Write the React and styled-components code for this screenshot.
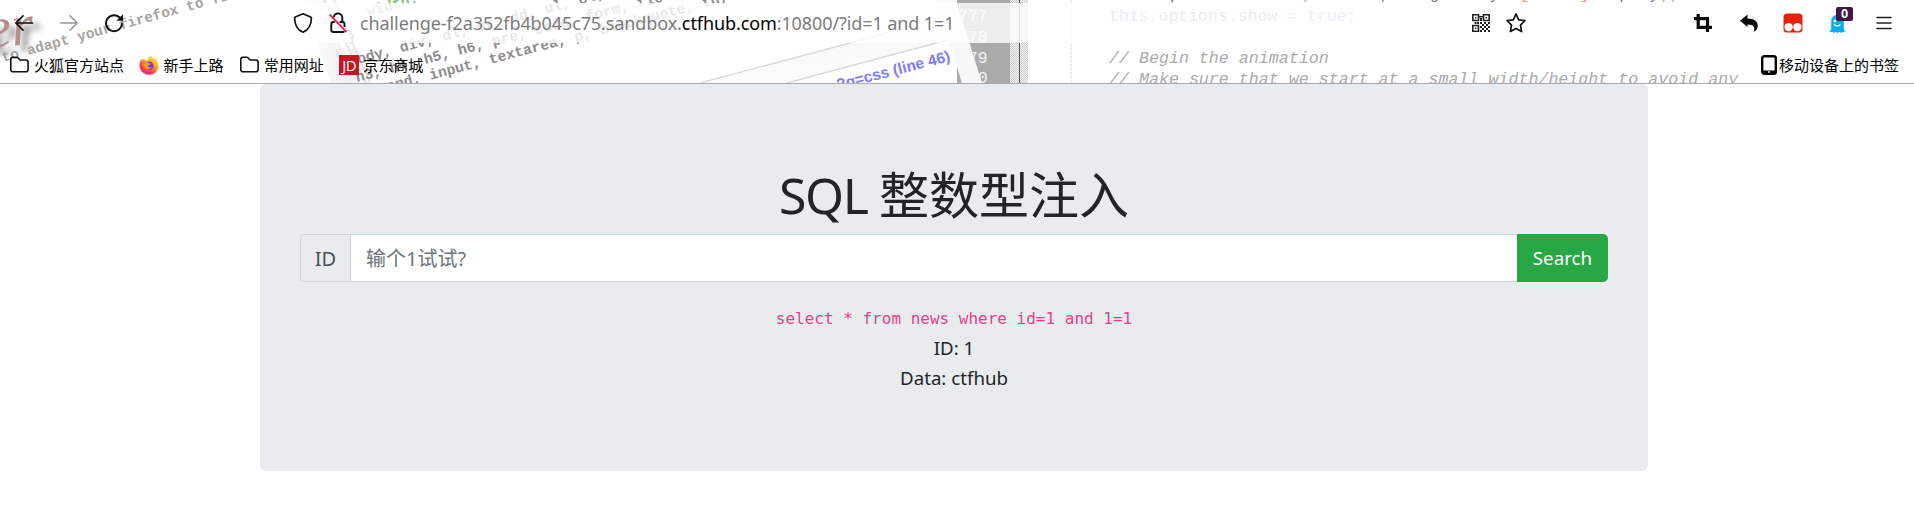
import React from "react";
import styled, { createGlobalStyle } from "styled-components";

const GlobalStyle = createGlobalStyle`
  * { box-sizing: border-box; }
  body {
    margin: 0;
    background: #fff;
    color: #212529;
    font-family: "Noto Sans", "Noto Sans CJK SC", sans-serif;
    overflow: hidden;
  }
  svg { display: block; flex: none; }
`;

const Page = styled.div`
  height: 508px;
`;

const Chrome = styled.header`
  position: relative;
  height: 84px;
  border-bottom: 1px solid #a9a9ab;
  overflow: hidden;
`;

const ThemeArt = styled.svg`
  position: absolute;
  inset: 0;
`;

const NavBar = styled.div`
  position: relative;
  display: flex;
  align-items: center;
  height: 45px;
  padding: 1px 22px 0 14px;
`;

const NavButtons = styled.div`
  display: flex;
  align-items: center;
  gap: 25px;
  width: 270px;
`;

const UrlBar = styled.div`
  display: flex;
  align-items: center;
  width: 1257px;
  height: 40px;
  padding: 0 14px 0 9px;
  background: rgba(255, 255, 255, 0.8);
`;

const UrlText = styled.div`
  flex: 1;
  margin-left: 12px;
  font-size: 18px;
  line-height: 36px;
  color: #7b7b7c;
  white-space: pre;
  letter-spacing: ${(p) => p.$spacing};
`;

const Host = styled.span`
  color: #000;
`;

const Icon = styled.span`
  display: flex;
  margin-left: ${(p) => p.$left || 0}px;
`;

const Extensions = styled.div`
  display: flex;
  align-items: center;
  margin-left: auto;
`;

const GhostWrap = styled.div`
  position: relative;
  margin-left: 26px;
  padding-right: 7px;
`;

const Badge = styled.span`
  position: absolute;
  left: 7px;
  top: -7px;
  width: 17px;
  height: 14px;
  border-radius: 2px;
  background: #421640;
  color: #fff;
  font-size: 12.5px;
  font-weight: 700;
  line-height: 14px;
  text-align: center;
`;

const Bookmarks = styled.div`
  position: relative;
  display: flex;
  align-items: center;
  height: 37px;
  margin-top: 1px;
  padding: 0 15px 0 9px;
  font-size: 15px;
  color: #000;
`;

const Bookmark = styled.div`
  display: flex;
  align-items: center;
  gap: ${(p) => p.$gap || 4}px;
  margin-right: 15.4px;
  line-height: 22px;
  white-space: nowrap;

  &:last-child {
    margin: 0 0 0 auto;
  }
`;

const JdLogo = styled.span`
  width: 20px;
  height: 20px;
  background: #c71622;
  color: #fff;
  font: 15px/21px "Open Sans", sans-serif;
  letter-spacing: -0.5px;
  text-align: center;
`;

const Panel = styled.main`
  width: 1388px;
  height: 387px;
  margin-left: 260px;
  padding: 80px 40px;
  border-radius: 6px;
  background: #e9ecef;
  text-align: center;
`;

const Title = styled.h1`
  margin: 0 0 10px;
  padding-top: 2px;
  font-size: 50px;
  font-weight: 400;
  line-height: 58px;
`;

const Latin = styled.span`
  letter-spacing: -1.4px;
`;

const SearchForm = styled.div`
  display: flex;
  height: 48px;
  margin-bottom: 21px;
  font-size: 20px;
`;

const Addon = styled.label`
  width: 50px;
  border: 1px solid #ced4da;
  border-right: 0;
  border-radius: 5px 0 0 5px;
  color: #495057;
  line-height: 47px;
`;

const Field = styled.input`
  flex: 1;
  min-width: 0;
  padding: 0 15px;
  border: 1px solid #ced4da;
  border-right: 0;
  border-radius: 0;
  background: #fff;
  font: inherit;
  outline: none;

  &::placeholder {
    color: #6c757d;
    opacity: 1;
  }
`;

const SearchButton = styled.button`
  width: 91px;
  padding: 0;
  border: 0;
  border-radius: 0 5px 5px 0;
  background: #28a745;
  color: #fff;
  font: inherit;
  font-size: 18.800px;
`;

const Result = styled.div`
  font-size: 18.700px;
  line-height: 30px;
`;

const Query = styled.code`
  display: block;
  color: #e83e8c;
  font: 16px/31px "DejaVu Sans Mono", monospace;
  height: 30px;
`;

const Folder = () => (
  <svg width="21" height="20" viewBox="0 0 21 20" fill="none" stroke="#111" strokeWidth="1.6" strokeLinejoin="round">
    <path d="M1.8 5v9.5a2.3 2.3 0 0 0 2.3 2.3h12.7a2.3 2.3 0 0 0 2.3-2.3V7.3A2.3 2.3 0 0 0 16.800 5H11L9.200 2.900A2 2 0 0 0 7.700 2.200H4.100A2.300 2.300 0 0 0 1.800 4.500z" />
  </svg>
);

const Firefox = () => (
  <svg width="20" height="20" viewBox="0 0 20 20">
    <defs>
      <linearGradient id="fox" x1="0.8" y1="0.05" x2="0.2" y2="1">
        <stop offset="0" stopColor="#fff04a" />
        <stop offset="0.4" stopColor="#ff9a24" />
        <stop offset="0.7" stopColor="#ff4139" />
        <stop offset="1" stopColor="#e91fa0" />
      </linearGradient>
    </defs>
    <path fill="url(#fox)" d="M2.200 4l1.500 1.600L5 3.500l1 2 2.500-.3C9.300 2.500 11 1 12.500.4c0 1.800 1.200 2.500 2.500 3.600l.4-1.500c3 2.600 4.300 5.800 4 9C18.800 16.300 15 19.800 10.300 19.800 5 19.800.8 16 .5 10.700.4 8 1 5.700 2.200 4z" />
    <circle cx="10.300" cy="10.800" r="4.300" fill="#6a3ee0" />
    <path fill="#ff9424" d="M4.500 7.500c2-1.500 4-.7 5.500.8l2 .3c-.2 1.200-2.600 1.200-3 2.400-.2 1.200 1.500 2.200 3.700 1-1 2.700-4.900 3.400-7 1.300-1.500-1.600-1.800-3.800-1.200-5.800z" />
  </svg>
);

const Back = ({ color }) => (
  <svg width="20" height="20" viewBox="0 0 20 20" fill="none" stroke={color} strokeWidth="1.7" strokeLinecap="round" strokeLinejoin="round">
    <path d="M18.500 10H2M9 2.800 1.800 10 9 17.200" />
  </svg>
);

const Forward = () => (
  <svg width="20" height="20" viewBox="0 0 20 20" fill="none" stroke="#969697" strokeWidth="1.600" strokeLinecap="round" strokeLinejoin="round">
    <path d="M1.500 10H18M11 2.800 18.200 10 11 17.200" />
  </svg>
);

const Reload = () => (
  <svg width="20" height="20" viewBox="0 0 20 20" fill="none" stroke="#111" strokeWidth="1.900">
    <path d="M16.500 5.500A8 8 0 1 0 18 10.800" strokeLinecap="round" />
    <path d="M19 1.200v6.600h-6.600z" fill="#111" stroke="none" />
  </svg>
);

const Shield = () => (
  <svg width="20" height="22" viewBox="0 0 20 22" fill="none" stroke="#111" strokeWidth="1.700" strokeLinejoin="round">
    <path d="M10 1.800 17.700 5q.7.300.7 1C18.300 12.500 15.500 18 10 20.200 4.500 18 1.700 12.500 1.600 6q0-.7.7-1z" />
  </svg>
);

const Lock = () => (
  <svg width="20" height="22" viewBox="0 0 20 22" fill="none" stroke="#111" strokeWidth="1.900">
    <path d="M5.700 5.500a4.300 4.300 0 0 1 8.600 0.500v4M11.500 10h3a2 2 0 0 1 2 2v3M3.300 11.500v6.500a2 2 0 0 0 2 2h9.400a2 2 0 0 0 1.600-.8M3.300 12.500q0-2.500 2-2.500h1.500" />
    <path d="m1.500 2.500 17 17.500" stroke="#e8285a" strokeWidth="1.800" />
  </svg>
);

const QrCode = () => (
  <svg width="20" height="20" viewBox="0 0 20 20" fill="none" stroke="#222" strokeWidth="1.600">
    <path d="M1.800 1.800h5.700v5.700H1.800zM12.500 1.800h5.700v5.700h-5.700zM1.800 12.500h5.700v5.700H1.800z" />
    <path fill="#222" stroke="none" d="M4 4h1.500v1.500H4zM14.600 4h1.500v1.500h-1.500zM4 14.600h1.500v1.500H4zM8 3h4v1.500H8zM9 5h2v3H9zM3.500 9h2v2h-2zM6 9h2v2H6zM9 9h2v2H9zM13 9h2v2h-2zM17 9h2v2h-2zM11 11h2v2h-2zM15 11h2v2h-2zM9 13h2v2H9zM13 13h2v2h-2zM17 13h2v2h-2zM11 15h2v2h-2zM15 15h2v2h-2zM9 17h2v2H9zM13 17h2v2h-2zM17 17h2v2h-2z" />
  </svg>
);

const Star = () => (
  <svg width="22" height="22" viewBox="0 0 22 22" fill="none" stroke="#111" strokeWidth="1.700" strokeLinejoin="round">
    <path d="m11 2 2.700 5.800 6.300.8-4.500 4.400 1.100 6.600L11 16.500l-5.600 3.100L6.500 13 2 8.600l6.300-.8z" />
  </svg>
);

const Crop = () => (
  <svg width="20" height="20" viewBox="0 0 20 20" fill="none" stroke="#0c0c0d" strokeWidth="3.200">
    <path d="M5.200 1v13.400H19M1 5.600h13.500V19" />
  </svg>
);

const Reply = () => (
  <svg width="20" height="20" viewBox="0 0 20 20">
    <path fill="#0c0c0d" d="M1 7.700 8.500 1.500v4c6.500 0 10.300 2.700 10.300 7.500 0 2.500-1.300 4.500-4.300 6 2-4.500.5-7.500-6-7.600V14z" />
  </svg>
);

const Monkey = () => (
  <svg width="20" height="20" viewBox="0 0 20 20">
    <rect x="0.500" y="0.500" width="19" height="19" rx="3.500" fill="#e8230b" />
    <circle cx="5.600" cy="14.100" r="4.200" fill="#fff" />
    <circle cx="14.400" cy="14.100" r="4.200" fill="#fff" />
  </svg>
);

const Ghost = () => (
  <svg width="17" height="19" viewBox="0 0 17 19">
    <path fill="#00aef0" d="M2.200 15.500V7a6.300 6.300 0 0 1 12.600 0v8.500l2 2.500-3-.3-1.500 1.200-2-1.200-1.800 1.200-1.800-1.200-2 1.200L3.300 17.700.2 18z" />
    <circle cx="6" cy="7" r="1.500" fill="#fff" />
    <path d="M5 10.500q3.500 3 6.500 0" stroke="#fff" fill="none" strokeWidth="1.300" />
  </svg>
);

const Menu = () => (
  <svg width="16" height="16" viewBox="0 0 16 16" stroke="#222" strokeWidth="1.500" strokeLinecap="round">
    <path d="M1 2.500h14M1 8h14M1 13.500h14" />
  </svg>
);

const Phone = () => (
  <svg width="16" height="20" viewBox="0 0 16 20">
    <rect x="1.200" y="1.200" width="13.600" height="17.600" rx="2" fill="none" stroke="#000" strokeWidth="2.400" />
    <path d="M1 15.500h14v3.500H1z" />
    <circle cx="8" cy="17" r="0.900" fill="#fff" />
  </svg>
);

const mono = '"Liberation Mono", monospace';

const Backdrop = () => (
  <ThemeArt width="1914" height="83" viewBox="0 0 1914 83" aria-hidden="true">
    <defs>
      <linearGradient id="edge" x1="0" x2="1">
        <stop offset="0" stopColor="#fff" />
        <stop offset="1" stopColor="#e4e4e4" />
      </linearGradient>
      <linearGradient id="band" x1="0" y1="0" x2="0.300" y2="1">
        <stop offset="0" stopColor="#ececec" />
        <stop offset="1" stopColor="#fafafa" />
      </linearGradient>
      <pattern id="dots" width="2" height="2" patternUnits="userSpaceOnUse">
        <rect width="2" height="2" fill="#f4f4f4" />
        <rect width="1" height="1" fill="#ccc" />
        <rect x="1" y="1" width="1" height="1" fill="#ccc" />
      </pattern>
      <filter id="soft"><feGaussianBlur stdDeviation="3" /></filter>
    </defs>
    <g fontFamily='"Liberation Serif", serif' fontSize="58" fontStyle="italic" transform="rotate(-6 0 46)">
      <text x="-7" y="54" fill="#888" filter="url(#soft)">er</text>
      <text x="-13" y="47" fill="#b38f8f">er</text>
    </g>
    <g fontFamily={mono} fontSize="14.500" fontWeight="700" fill="#a6a3a1">
      <text transform="translate(3 62) rotate(-15.400)">to adapt your firefox to fit</text>
    </g>
    <path d="M302 0h22l30 83h-23z" fill="url(#edge)" opacity="0.6" />
    <path d="M324 0l42 83M334 0l36 83" stroke="#dedede" strokeWidth="1.500" />
    <g fontFamily={mono} fontSize="14.700" fontWeight="700" fill="#8d8b8e">
      <text transform="translate(368 16) rotate(-15)" fill="#85c485">width:</text>
      <text transform="translate(348 41) rotate(-15)">{"}"}</text>
      <text transform="translate(350 66) rotate(-15)">body, div, dl, dt, dd, ul, ol,</text>
      <text transform="translate(357 82) rotate(-14.800)">h3, h4, h5, h6, pre, code, form, fieldset</text>
      <text transform="translate(388 91) rotate(-14.800)">and, input, textarea, p, blockquote, th,</text>
    </g>
    <path d="M700 83 850 43 940 18 980 0H990V31L940 43 787 83z" fill="url(#band)" opacity="0.600" />
    <path d="M700 83 850 43 940 18M787 83 940 42 982 31" fill="none" stroke="#d9d9d9" strokeWidth="1.300" />
    <path d="M957 0h53v83H957z" fill="#aaa" />
    <g fontFamily={mono} fontSize="16.500" fill="#f3f3f3">
      <text x="958" y="21">777</text>
      <text x="958" y="42">778</text>
      <text x="958" y="63">779</text>
      <text x="958" y="83">780</text>
    </g>
    <path d="M936 0h20l26 83h-20z" fill="#f8f8f8" />
    <rect x="1010" width="18" height="83" fill="url(#dots)" />
    <path d="M1019.500 0v83" stroke="#555" />
    <path d="M1071 0v83" stroke="#ccc" strokeDasharray="1 1" />
    <text transform="translate(838 90) rotate(-14.500)" fontFamily='"Liberation Sans", sans-serif' fontSize="15.500" fontWeight="700" fill="#7d7df8">?g=css (line 46)</text>
    <g fontFamily={mono} fontSize="16.650" style={{ whiteSpace: "pre" }}>
      <text x="1110" y="-1" fill="#77727a">{"this.options.onLoad"}<tspan fill="#ff8877">{"("}</tspan>{"element, target.style"}<tspan fill="#ff8877">{"[width]"}</tspan>{"display"}<tspan fill="#ff8877">{");"}</tspan></text>
      <text x="1109" y="21" fontSize="16.500" fill="#9d9d9d"><tspan fill="#9999ff">this</tspan><tspan fill="#ff9c90">.</tspan>options<tspan fill="#ff9c90">.</tspan>show <tspan fill="#ff9c90">=</tspan> <tspan fill="#9999ff">true</tspan><tspan fill="#ff9c90">;</tspan></text>
      <g fontStyle="italic" fill="#aaa">
        <text x="1109" y="63">// Begin the animation</text>
        <text x="1109" y="84">// Make sure that we start at a small width/height to avoid any</text>
      </g>
    </g>
  </ThemeArt>
);

export default function App() {
  return (
    <Page>
      <GlobalStyle />
      <Chrome>
        <Backdrop />
        <NavBar>
          <NavButtons>
            <Icon><Back color="#111" /></Icon>
            <Icon><Forward /></Icon>
            <Icon><Reload /></Icon>
          </NavButtons>
          <UrlBar>
            <Icon><Shield /></Icon>
            <Icon $left={15}><Lock /></Icon>
            <UrlText $spacing="-0.1px">
              challenge-f2a352fb4b045c75.sandbox.<Host>ctfhub.com</Host>:10800/?id=1 and 1=1
            </UrlText>
            <Icon><QrCode /></Icon>
            <Icon $left={14}><Star /></Icon>
          </UrlBar>
          <Extensions>
            <Icon><Crop /></Icon>
            <Icon $left={26}><Reply /></Icon>
            <Icon $left={24}><Monkey /></Icon>
            <GhostWrap>
              <Ghost />
              <Badge>0</Badge>
            </GhostWrap>
            <Icon $left={23}><Menu /></Icon>
          </Extensions>
        </NavBar>
        <Bookmarks>
          <Bookmark><Folder />火狐官方站点</Bookmark>
          <Bookmark><Firefox />新手上路</Bookmark>
          <Bookmark><Folder />常用网址</Bookmark>
          <Bookmark><JdLogo>JD</JdLogo>京东商城</Bookmark>
          <Bookmark $gap={2}><Phone />移动设备上的书签</Bookmark>
        </Bookmarks>
      </Chrome>
      <Panel>
        <Title><Latin>SQL </Latin>整数型注入</Title>
        <SearchForm>
          <Addon htmlFor="record-id">ID</Addon>
          <Field id="record-id" placeholder="输个1试试?" />
          <SearchButton>Search</SearchButton>
        </SearchForm>
        <Query>select * from news where id=1 and 1=1</Query>
        <Result>ID: 1</Result>
        <Result>Data: ctfhub</Result>
      </Panel>
    </Page>
  );
}
